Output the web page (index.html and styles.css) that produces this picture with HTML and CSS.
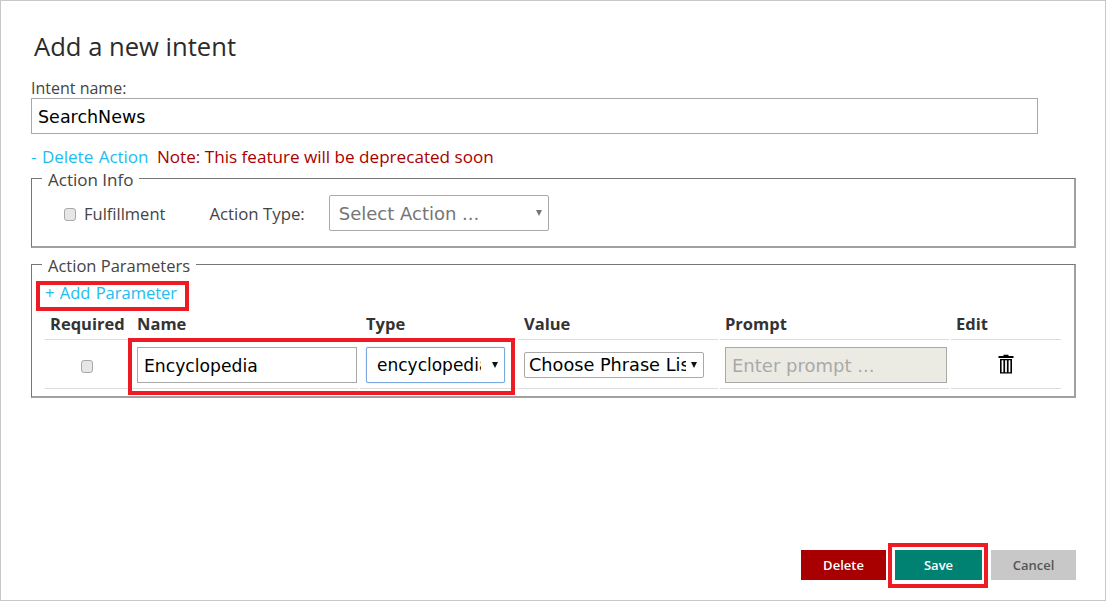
FILE: index.html
```html
<!DOCTYPE html>
<html>
  <head>
    <meta charset="UTF-8" />
    <title>Add a new intent</title>
    <link rel="stylesheet" href="styles.css">
  </head>
  <body>
    <div class="dialog">
      <h2 class="title">Add a new intent</h2>
      <form class="intent-form">
        <label class="name-label" for="intentName">Intent name:</label>
        <input class="text-input intent-name" type="text" id="intentName" value="SearchNews"/>

        <div class="action-links">
          <a class="link">- Delete Action</a>
          <span class="note">Note: This feature will be deprecated soon</span>
        </div>

        <fieldset class="group action-info">
          <legend>Action Info</legend>
          <div class="info-row">
            <label class="check-label"><span class="checkbox"></span>Fulfillment</label>
            <label class="type-label">Action Type:</label>
            <div class="select action-select">
              <span class="select-text">Select Action ...</span>
              <span class="caret"></span>
            </div>
          </div>
        </fieldset>

        <fieldset class="group action-params">
          <legend>Action Parameters</legend>
          <a class="link add-param">+ Add Parameter</a>
          <table class="param-table">
            <thead>
              <tr>
                <th class="col-required">Required</th>
                <th class="col-name">Name</th>
                <th class="col-type">Type</th>
                <th class="col-value">Value</th>
                <th class="col-prompt">Prompt</th>
                <th class="col-edit">Edit</th>
              </tr>
            </thead>
            <tbody>
              <tr>
                <td class="cell-center"><span class="checkbox"></span></td>
                <td class="col-name"><input class="text-input param-input" type="text" value="Encyclopedia"/></td>
                <td class="col-type">
                  <div class="select type-select">
                    <span class="select-text">encyclopedia</span>
                    <span class="caret"></span>
                  </div>
                </td>
                <td class="col-value">
                  <div class="select value-select">
                    <span class="select-text">Choose Phrase List</span>
                    <span class="caret"></span>
                  </div>
                </td>
                <td class="col-prompt"><input class="text-input param-input prompt-input" type="text" placeholder="Enter prompt ..." disabled/></td>
                <td class="cell-center">
                  <svg class="trash" width="16" height="20" viewBox="0 0 16 20">
                    <path d="M5.5 2V.8h5V2H15.5v2H.5V2z" fill="#000"/>
                    <path d="M2 5h12v14.5H2zM3.6 6.2v12h1.8v-12zM7.1 6.2v12h1.8v-12zM10.6 6.2v12h1.8v-12z" fill="#000" fill-rule="evenodd"/>
                  </svg>
                </td>
              </tr>
            </tbody>
          </table>
        </fieldset>
      </form>

      <div class="buttons">
        <button class="btn btn-delete" type="button">Delete</button>
        <button class="btn btn-save" type="button">Save</button>
        <button class="btn btn-cancel" type="button">Cancel</button>
      </div>

      <div class="callout callout-add"></div>
      <div class="callout callout-row"></div>
      <div class="callout callout-save"></div>
    </div>
  </body>
</html>
```

FILE: styles.css
```css
* {
  box-sizing: border-box;
}

html, body {
  margin: 0;
  padding: 0;
  background: #fff;
}

body {
  font-family: "Open Sans", "Noto Sans", sans-serif;
  color: #333;
}

.dialog {
  position: relative;
  width: 1106px;
  height: 601px;
  border: 1px solid #c8c8c8;
  padding: 0 30px;
}

.title {
  margin: 29px 0 0 3px;
  font-size: 25.6px;
  line-height: 33px;
  font-weight: 400;
  color: #2b2b2b;
}

.intent-form {
  margin-top: 16px;
}

.name-label {
  display: block;
  font-size: 16px;
  line-height: 19px;
  color: #444;
}

.text-input {
  display: block;
  height: 36px;
  padding: 2px 6px 0;
  border: 1px solid #a9a9a9;
  font-family: "DejaVu Sans", sans-serif;
  font-size: 17.5px;
  color: #000;
  background: #fff;
}

.intent-name {
  width: 1007px;
}

.action-links {
  margin-top: 11px;
  height: 25px;
  font-size: 17px;
  line-height: 24px;
}

.link {
  color: #1ebcf0;
  word-spacing: 1px;
}

.note {
  margin-left: 4px;
  font-size: 17.1px;
  color: #a80000;
}

.group {
  margin: 0;
  width: 1045px;
  border-style: solid;
  border-color: #767676 #a0a0a0 #a0a0a0 #767676;
  border-width: 1px 2px 2px 1px;
  padding: 0;
}

.group legend {
  margin-left: 10px;
  padding: 4px 6px 0;
  font-size: 16.5px;
  line-height: 20px;
  color: #444;
}

.action-info {
  height: 82px;
  margin-top: -4px;
}

.action-info legend {
  font-size: 17px;
}

.info-row {
  display: flex;
  align-items: center;
  margin-top: 5px;
  padding-left: 32px;
}

.check-label {
  display: flex;
  align-items: center;
  font-size: 16.5px;
  color: #444;
}

.checkbox {
  display: inline-block;
  width: 12px;
  height: 13px;
  border: 1px solid #a8a8a8;
  border-radius: 3px;
  background: #e6e6e6;
}

.check-label .checkbox {
  margin-right: 8px;
  margin-top: 2px;
}

.type-label {
  margin-left: 44px;
  font-size: 16.8px;
  color: #444;
}

.select {
  position: relative;
  border: 1px solid #a9a9a9;
  background: #fff;
  overflow: hidden;
  display: flex;
  align-items: center;
  font-family: "DejaVu Sans", sans-serif;
  font-size: 17.7px;
  color: #000;
}

.select-text {
  display: block;
  overflow: hidden;
  white-space: nowrap;
}

.caret {
  position: absolute;
  top: 50%;
  right: 6px;
  margin-top: -3px;
  border-left: 3px solid transparent;
  border-right: 3px solid transparent;
  border-top: 6px solid #111;
}

.action-select {
  margin-left: 24px;
  width: 220px;
  height: 36px;
  padding-left: 9px;
  border-radius: 2px;
  font-size: 18px;
  color: #757575;
}

.action-select .caret {
  border-top-color: #757575;
}

.action-params {
  height: 146px;
  margin-top: 4px;
}

.add-param {
  display: block;
  margin: 5px 0 0 13px;
  height: 24px;
  font-size: 16.5px;
  line-height: 24px;
}

.param-table {
  margin: 5px 0 0 11px;
  width: 1020px;
  table-layout: fixed;
  border-collapse: separate;
  border-spacing: 2px 0;
}

.param-table th {
  text-align: left;
  height: 30px;
  padding: 0 0 2px 5px;
  font-size: 16.5px;
  font-weight: 700;
  color: #333;
  border-bottom: 1px solid #ddd;
}

.param-table td {
  height: 49px;
  padding: 2px 0 0;
  border-bottom: 1px solid #ddd;
  vertical-align: middle;
}

.param-table td.cell-center {
  text-align: center;
}

.col-required { width: 83px; }
.col-name { width: 228px; }
.col-type { width: 156px; }
.col-value { width: 200px; }
.col-prompt { width: 229px; }
.col-edit { width: 110px; }

.param-table th.col-name { padding-left: 7px; }
.param-table td.col-name { padding-left: 7px; }
.param-table th.col-type,
.param-table td.col-type,
.param-table th.col-value,
.param-table td.col-value { padding-left: 6px; }
.param-table th.col-prompt,
.param-table td.col-prompt { padding-left: 5px; }

.cell-center .checkbox {
  display: block;
  margin: 2px auto 0;
}

.param-input {
  width: 220px;
  font-size: 17.2px;
}

.prompt-input {
  width: 222px;
  padding-top: 0;
  font-size: 18px;
  background: #ebebe4;
}

.prompt-input::placeholder {
  color: #a9a9a9;
  opacity: 1;
}

.type-select {
  width: 139px;
  height: 36px;
  padding-left: 10px;
  border: 1px solid #7ba7e0;
  border-radius: 2px;
  box-shadow: 0 0 1px #7ba7e0;
  font-size: 17px;
}

.type-select .select-text {
  width: 104px;
}

.value-select {
  width: 180px;
  height: 26px;
  padding-left: 4px;
  border-radius: 2px;
}

.value-select .select-text {
  width: 157px;
}

.trash {
  display: block;
  margin: -2px auto 0;
}

.buttons {
  position: absolute;
  right: 29px;
  bottom: 20px;
  display: flex;
  gap: 4px;
}

.btn {
  height: 30px;
  padding: 0;
  border: none;
  font-family: "Open Sans", sans-serif;
  font-size: 13px;
  font-weight: 600;
}

.btn-delete {
  width: 85px;
  background: #a80000;
  color: #fff;
}

.btn-save {
  width: 87px;
  margin: 0 5px;
  background: #008272;
  color: #fff;
}

.btn-cancel {
  width: 85px;
  background: #c8c8c8;
  color: #555;
}

.callout {
  position: absolute;
  border: 4px solid #ed1c24;
}

.callout-add {
  left: 35px;
  top: 280px;
  width: 153px;
  height: 30px;
}

.callout-row {
  left: 127px;
  top: 337px;
  width: 387px;
  height: 57px;
}

.callout-save {
  left: 887px;
  top: 542px;
  width: 100px;
  height: 45px;
}
```
